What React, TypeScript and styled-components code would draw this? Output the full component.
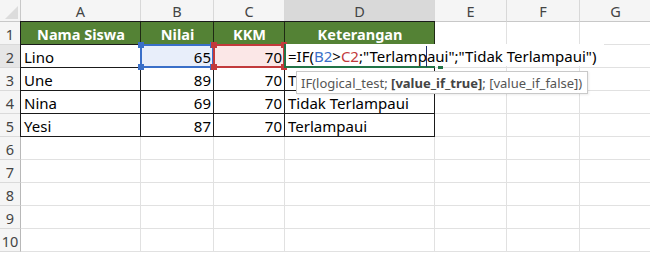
import * as React from "react";
import styled, { createGlobalStyle, css } from "styled-components";

const GlobalStyle = createGlobalStyle`
  html, body {
    margin: 0;
    padding: 0;
    background: #ffffff;
    overflow: hidden;
  }
  body {
    font-family: "Noto Sans", "Open Sans", sans-serif;
  }
`;

const columns = [
  { name: "A", width: 120 },
  { name: "B", width: 73 },
  { name: "C", width: 71 },
  { name: "D", width: 150 },
  { name: "E", width: 72 },
  { name: "F", width: 73 },
  { name: "G", width: 72 },
];

const BLUE = "#3a6fc8";
const RED = "#c23a3c";
const GREEN = "#217346";

type Row = { name: string; score: string; kkm: string; note: string };

const rows: Row[] = [
  { name: "Lino", score: "65", kkm: "70", note: "" },
  { name: "Une", score: "89", kkm: "70", note: "T" },
  { name: "Nina", score: "69", kkm: "70", note: "Tidak Terlampaui" },
  { name: "Yesi", score: "87", kkm: "70", note: "Terlampaui" },
];

const Sheet = styled.div`
  display: grid;
  grid-template-columns: 21px ${columns.map((c) => `${c.width}px`).join(" ")};
  grid-template-rows: 22px;
  grid-auto-rows: 23px;
  width: 652px;
  font-size: 15px;
  color: #000;
`;

const Corner = styled.div`
  position: relative;
  background: #f5f5f5;
  border-right: 1px solid #c8c8c8;
  border-bottom: 1px solid #c8c8c8;
  box-sizing: border-box;

  &::after {
    content: "";
    position: absolute;
    right: 2px;
    bottom: 2px;
    width: 0;
    height: 0;
    border-left: 13px solid transparent;
    border-bottom: 13px solid #dcdcdc;
  }
`;

const ColHeader = styled.div<{ $active?: boolean }>`
  display: flex;
  align-items: center;
  justify-content: center;
  box-sizing: border-box;
  background: ${(p) => (p.$active ? "#d9d9d9" : "#f5f5f5")};
  border-right: 1px solid #d8d8d8;
  border-bottom: 1px solid #c8c8c8;
  color: #444;
  font-size: 14.5px;
`;

const RowHeader = styled.div<{ $active?: boolean }>`
  display: flex;
  align-items: center;
  justify-content: center;
  box-sizing: border-box;
  background: ${(p) => (p.$active ? "#e6e6e6" : "#f5f5f5")};
  border-right: 1px solid #b8b8b8;
  border-bottom: 1px solid #dadada;
  color: #444;
  font-size: 14.5px;
  padding-top: 1px;
`;

type Kind = "plain" | "head" | "data";

const Cell = styled.div<{
  $kind?: Kind;
  $align?: "left" | "right" | "center";
  $first?: boolean;
  $top?: boolean;
  $fill?: string;
}>`
  position: relative;
  display: flex;
  align-items: center;
  box-sizing: border-box;
  padding: 1px 2px 0 3px;
  white-space: nowrap;
  background: ${(p) => p.$fill || "#fff"};
  border-right: 1px solid #e1e1e1;
  border-bottom: 1px solid #e1e1e1;
  justify-content: ${(p) =>
    p.$align === "right" ? "flex-end" : p.$align === "center" ? "center" : "flex-start"};

  ${(p) =>
    p.$kind === "data" &&
    css`
      border-right-color: #1a1a1a;
      border-bottom-color: #1a1a1a;
    `}

  ${(p) =>
    p.$kind === "head" &&
    css`
      background: #548235;
      color: #fff;
      font-weight: 700;
      font-size: 14.5px;
      border-right-color: #1f2a14;
      border-bottom-color: #1a1a1a;
    `}

  ${(p) =>
    (p.$first || p.$top) &&
    css`
      box-shadow: ${p.$first ? "-1px 0 0 #1a1a1a" : "0 0 0 transparent"},
        ${p.$top ? "0 -1px 0 #1a1a1a" : "0 0 0 transparent"},
        ${p.$first && p.$top ? "-1px -1px 0 #1a1a1a" : "0 0 0 transparent"};
    `}
`;

const RefBox = styled.div<{ $color: string }>`
  position: absolute;
  left: -1px;
  top: -1px;
  right: -1px;
  bottom: -1px;
  border: 2px solid ${(p) => p.$color};
  z-index: 2;
  pointer-events: none;
`;

const Handle = styled.span<{ $color: string; $x: "l" | "r"; $y: "t" | "b" }>`
  position: absolute;
  width: 6px;
  height: 6px;
  background: ${(p) => p.$color};
  ${(p) => (p.$x === "l" ? "left: -4px;" : "right: -4px;")}
  ${(p) => (p.$y === "t" ? "top: -4px;" : "bottom: -4px;")}
`;

const ActiveFrame = styled.div`
  position: absolute;
  left: -1px;
  top: -1px;
  right: -1px;
  bottom: -1px;
  border: 2px solid ${GREEN};
  z-index: 3;
`;

const FillHandle = styled.span`
  position: absolute;
  right: -10px;
  bottom: -3px;
  width: 5px;
  height: 4px;
  background: ${GREEN};
`;

const EditBox = styled.div`
  position: absolute;
  left: 1px;
  top: -1px;
  bottom: 1px;
  display: flex;
  align-items: center;
  padding: 2px 8px 0 2px;
  background: #fff;
  white-space: nowrap;
  z-index: 4;
`;

const Ref = styled.span<{ $color: string }>`
  color: ${(p) => p.$color};
`;

const Caret = styled.span`
  display: inline-block;
  width: 1px;
  height: 21px;
  margin: 0 -0.5px;
  background: #1e2f6e;
  vertical-align: middle;
`;

const Tooltip = styled.div`
  position: absolute;
  left: 11px;
  top: 3px;
  height: 21px;
  display: flex;
  align-items: center;
  padding: 0 5px 0 4px;
  background: #fff;
  border: 1px solid #c9c9c9;
  box-shadow: 1px 1px 2px rgba(0, 0, 0, 0.08);
  color: #555;
  font-size: 13px;
  white-space: nowrap;
  z-index: 5;

  b {
    color: #444;
    font-weight: 700;
  }
`;

function RefFrame({ color }: { color: string }) {
  return (
    <RefBox $color={color}>
      <Handle $color={color} $x="l" $y="t" />
      <Handle $color={color} $x="r" $y="t" />
      <Handle $color={color} $x="l" $y="b" />
      <Handle $color={color} $x="r" $y="b" />
    </RefBox>
  );
}

export default function App() {
  const emptyRows = Array.from({ length: 5 }, (_, i) => i + 6);

  return (
    <>
      <GlobalStyle />
      <Sheet>
        <Corner />
        {columns.map((c) => (
          <ColHeader key={c.name} $active={c.name === "D"}>
            {c.name}
          </ColHeader>
        ))}

        {/* header row */}
        <RowHeader>1</RowHeader>
        <Cell $kind="head" $align="center" $first $top>Nama Siswa</Cell>
        <Cell $kind="head" $align="center" $top>Nilai</Cell>
        <Cell $kind="head" $align="center" $top>KKM</Cell>
        <Cell $kind="head" $align="center" $top>Keterangan</Cell>
        <Cell />
        <Cell />
        <Cell />

        {rows.map((r, i) => {
          const n = i + 2;
          return (
            <React.Fragment key={n}>
              <RowHeader $active={n === 2}>{n}</RowHeader>
              <Cell $kind="data" $first>{r.name}</Cell>
              <Cell $kind="data" $align="right" $fill={n === 2 ? "#e8eefa" : undefined}>
                {r.score}
                {n === 2 && <RefFrame color={BLUE} />}
              </Cell>
              <Cell $kind="data" $align="right" $fill={n === 2 ? "#fbe7e7" : undefined}>
                {r.kkm}
                {n === 2 && <RefFrame color={RED} />}
              </Cell>
              <Cell $kind="data">
                {r.note}
                {n === 2 && (
                  <>
                    <ActiveFrame>
                      <FillHandle />
                    </ActiveFrame>
                    <EditBox>
                      =IF(<Ref $color={BLUE}>B2</Ref>&gt;<Ref $color={RED}>C2</Ref>;"Terlamp
                      <Caret />
                      aui";"Tidak Terlampaui")
                    </EditBox>
                  </>
                )}
                {n === 3 && (
                  <Tooltip>
                    IF(logical_test;&nbsp;<b>[value_if_true]</b>; [value_if_false])
                  </Tooltip>
                )}
              </Cell>
              <Cell />
              <Cell />
              <Cell />
            </React.Fragment>
          );
        })}

        {emptyRows.map((n) => (
          <React.Fragment key={n}>
            <RowHeader>{n}</RowHeader>
            {columns.map((c) => (
              <Cell key={c.name} />
            ))}
          </React.Fragment>
        ))}
      </Sheet>
    </>
  );
}
